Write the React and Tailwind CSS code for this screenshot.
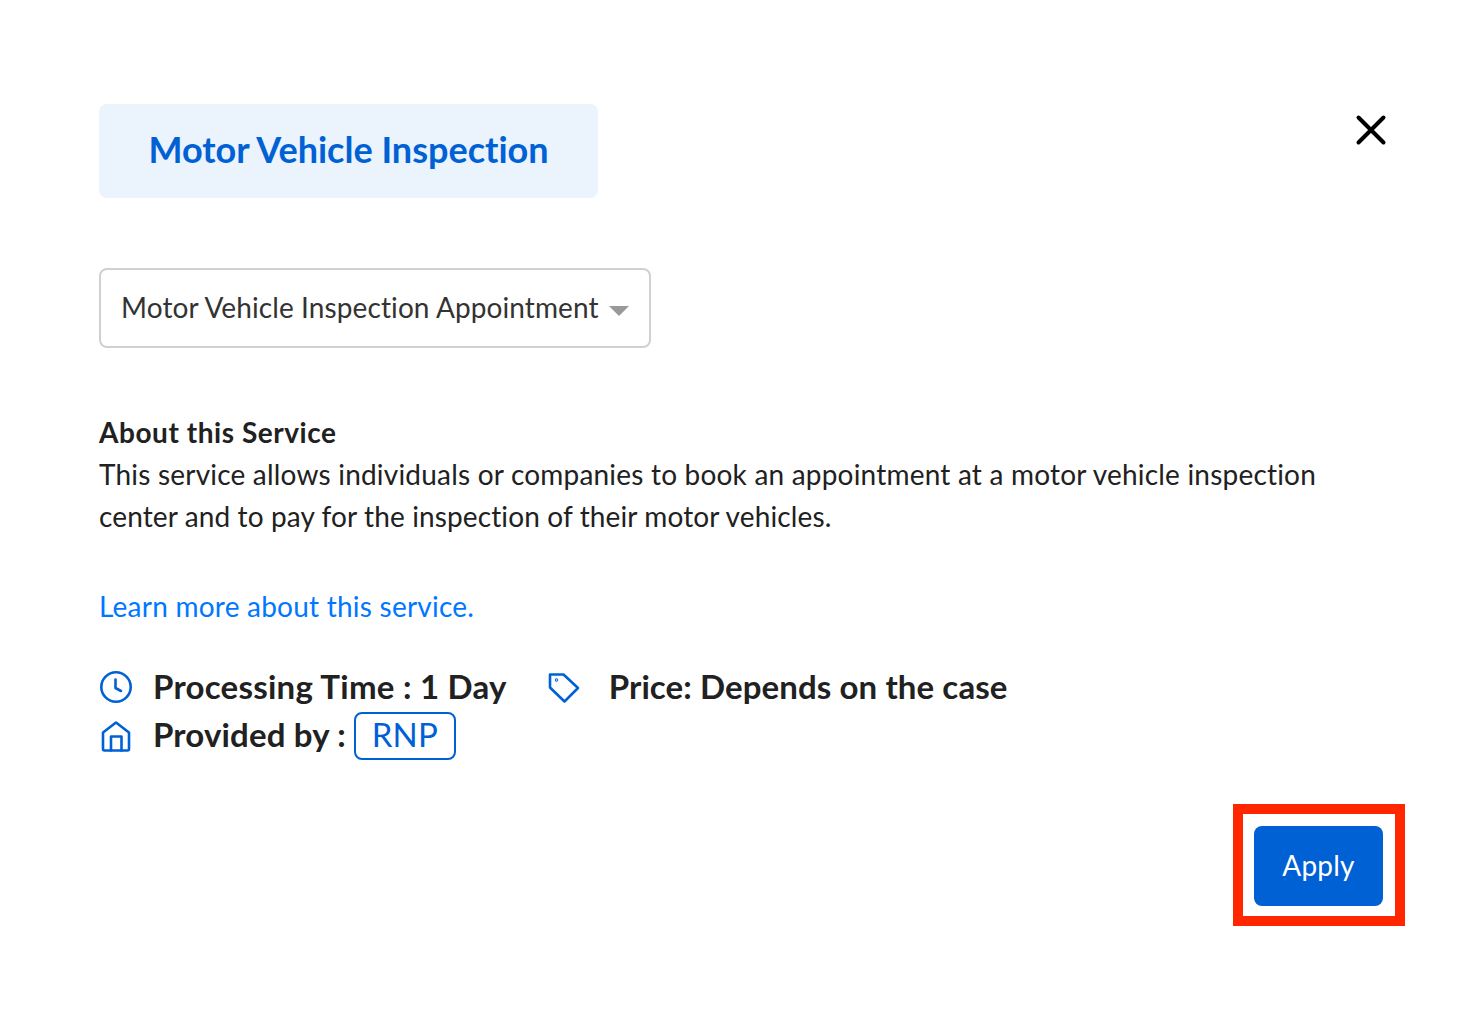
import React from "react";

export default function App() {
  return (
    <div className="w-[1474px] h-[1022px] bg-white text-[#212121] pt-[104px] pl-[99px] pr-[69px] font-['Lato',sans-serif]">
      <div className="flex justify-between items-start">
        <div className="w-[499px] h-[94px] rounded-lg bg-[#ebf3fd] flex items-center justify-center text-[#0061d5] text-[36px] font-bold tracking-[0.01px] pb-[4px]">
          Motor Vehicle Inspection
        </div>
        <svg width="32" height="32" viewBox="0 0 32 32" className="mt-[10px] mr-[18px]" fill="none" stroke="#000" strokeWidth="4" strokeLinecap="round">
          <path d="M3.5 3.5 L28.5 28.5 M28.5 3.5 L3.5 28.5" />
        </svg>
      </div>
      <div className="mt-[70px] w-[552px] h-[80px] rounded-lg border-2 border-[#d0d0d0] flex items-center pl-[20px] text-[28px] tracking-[0.1px] text-[#333] pb-[2px]">
        <span>Motor Vehicle Inspection Appointment</span>
        <svg width="20" height="10" viewBox="0 0 20 10" className="ml-[10px] mt-[8px]"><path d="M0 0 H20 L10 10 Z" fill="#999" /></svg>
      </div>
      <div className="mt-[63px] text-[28px] leading-[42px] tracking-[0.2px]">
        <div className="font-bold tracking-[0.55px]">About this Service</div>
        <div>This service allows individuals or companies to book an appointment at a motor vehicle inspection<br /><span className="tracking-[0.12px]">center and to pay for the inspection of their motor vehicles.</span></div>
      </div>
      <a className="block mt-[48px] text-[28px] leading-[42px] text-[#0077ff] tracking-[0.23px]">Learn more about this service.</a>
      <div className="mt-[36px] text-[33px] font-bold leading-[48px] text-[#212121] tracking-[0.25px]">
        <div className="flex items-center h-[48px] mb-[1px]">
          <svg width="34" height="34" viewBox="0 0 34 34" fill="none" stroke="#0061d5" strokeWidth="2.6" strokeLinecap="round" strokeLinejoin="round"><circle cx="17" cy="17" r="14.7" /><path d="M16.5 9.5V18l5.5 3" /></svg>
          <span className="ml-[20px] mb-[2px]">Processing Time : 1 Day</span>
          <svg width="34" height="34" viewBox="0 0 34 34" fill="none" stroke="#0061d5" strokeWidth="2.6" strokeLinecap="round" strokeLinejoin="round" className="ml-[40px]"><path d="M3 4.5 H16.5 L31 18 L17.5 31.5 L3 17.5 Z" /><circle cx="9.5" cy="10" r="0.5" /></svg>
          <span className="ml-[28px] mb-[2px] tracking-[0.1px]">Price: Depends on the case</span>
        </div>
        <div className="flex items-center h-[48px]">
          <svg width="34" height="34" viewBox="0 0 34 34" fill="none" stroke="#0061d5" strokeWidth="2.6" strokeLinecap="round" strokeLinejoin="round"><path d="M4 13.5 L17 3.5 L30 13.5 V30 a1.5 1.5 0 0 1 -1.5 1.5 h-23 a1.5 1.5 0 0 1 -1.5 -1.5 Z" /><path d="M12 31.5 V17.5 H22.5 V31.5" /></svg>
          <span className="ml-[20px] mb-[4px] tracking-[0.17px]">Provided by :</span>
          <span className="ml-[8px] h-[48px] w-[102px] rounded-lg border-2 border-[#0061d5] text-[#0061d5] font-normal flex items-center justify-center pb-[4px]">RNP</span>
        </div>
      </div>
      <div className="flex justify-end mt-[44px]">
        <div className="w-[172px] h-[122px] border-[10px] border-[#ff2600] flex items-center justify-center">
          <button className="w-[129px] h-[80px] rounded-lg bg-[#0061d5] text-white text-[28px] tracking-[0.2px] pb-[2px] mr-[1px] mt-[1px]">Apply</button>
        </div>
      </div>
    </div>
  );
}
